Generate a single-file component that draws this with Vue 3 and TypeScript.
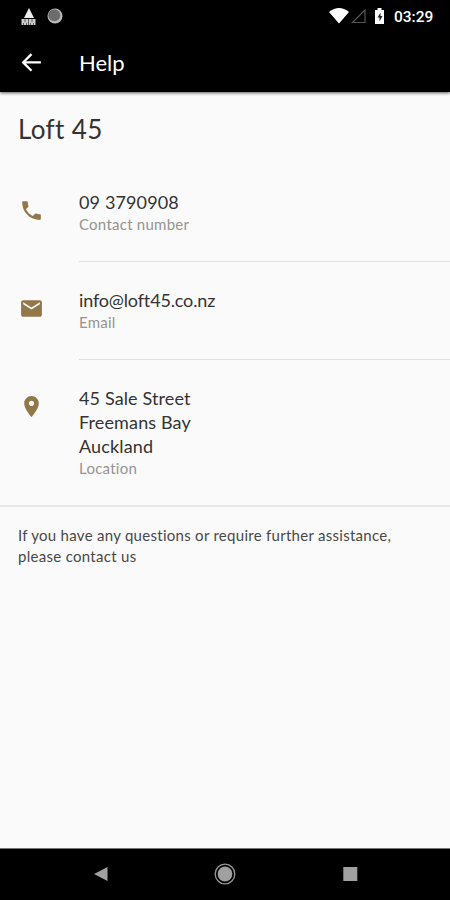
<script setup lang="ts">
interface Contact {
  id: string
  lines: string[]
  label: string
  icon: string
}

const contacts: Contact[] = [
  {
    id: 'phone',
    lines: ['09 3790908'],
    label: 'Contact number',
    icon: 'M6.62 10.79c1.44 2.83 3.76 5.14 6.59 6.59l2.2-2.2c.27-.27.67-.36 1.02-.24 1.12.37 2.33.57 3.57.57.55 0 1 .45 1 1V20c0 .55-.45 1-1 1C10.61 21 3 13.39 3 4c0-.55.45-1 1-1h3.5c.55 0 1 .45 1 1 0 1.25.2 2.45.57 3.57.11.35.03.74-.25 1.02l-2.2 2.2z',
  },
  {
    id: 'email',
    lines: ['info@loft45.co.nz'],
    label: 'Email',
    icon: 'M20 4H4c-1.1 0-2 .9-2 2v12c0 1.100.9 2 2 2h16c1.100 0 2-.9 2-2V6c0-1.100-.9-2-2-2zm0 4l-8 5-8-5V6l8 5 8-5v2z',
  },
  {
    id: 'place',
    lines: ['45 Sale Street', 'Freemans Bay', 'Auckland'],
    label: 'Location',
    icon: 'M12 2C8.13 2 5 5.13 5 9c0 5.250 7 13 7 13s7-7.750 7-13c0-3.870-3.130-7-7-7zm0 9.500c-1.380 0-2.500-1.120-2.500-2.500s1.120-2.500 2.500-2.500 2.500 1.120 2.500 2.500-1.120 2.500-2.500 2.500z',
  },
]
</script>

<template>
  <div class="screen">
    <header class="top">
      <div class="status">
        <svg class="notices" width="46" height="18" viewBox="0 0 46 18">
          <path d="M9 0 14 10H4z" fill="#eee" />
          <path d="M1.500 11h14v6h-14z" fill="#ccc" />
          <path d="M5 11v3M8.500 11v6M12 11v3M3.500 15v2M6.500 15v2M10.500 15v2M13.500 15v2" stroke="#444" stroke-width=".8" />
          <circle cx="35" cy="8" r="7.500" fill="#bbb" />
          <circle cx="34.300" cy="7.300" r="6" fill="#6c6c6c" />
        </svg>
        <svg class="signals" width="60" height="18" viewBox="0 0 60 18">
          <path d="M0 4Q10-4 20 4L10 15.500z" fill="#fff" />
          <path d="M36 2v12.500H23.500z" fill="none" stroke="#555" stroke-width="1.200" />
          <path d="M48.500 0h4v2H55v14h-9V2h2.500z" fill="#fff" />
          <path d="M51.500 4.500 48.500 9.500h2v4l3-5.500h-2z" fill="#222" />
        </svg>
        <span class="time">03:29</span>
      </div>
      <div class="appbar">
        <svg class="back" width="25" height="25" viewBox="0 0 24 24">
          <path d="M21 11.900H4M12 4 4 11.900l8 8" fill="none" stroke="#fff" stroke-width="2.200" />
        </svg>
        <h1>Help</h1>
      </div>
    </header>
    <main>
      <h2>Loft 45</h2>
      <section v-for="c in contacts" :key="c.id" class="contact" :class="c.id">
        <svg class="icon" width="25" height="25" viewBox="0 0 24 24"><path :d="c.icon" /></svg>
        <div class="details">
          <div v-for="line in c.lines" :key="line" class="value">{{ line }}</div>
          <div class="label">{{ c.label }}</div>
        </div>
      </section>
      <p>
        <span class="wide">If you have any questions or require further assistance,</span><br />please contact us
      </p>
    </main>
    <nav>
      <svg width="450" height="51" viewBox="0 0 450 51" fill="#a0a0a0">
        <path d="M94 25 107.500 18v14z" />
        <circle cx="225" cy="25" r="9.800" fill="none" stroke="#999" stroke-width="1.300" />
        <circle cx="225" cy="25" r="7.400" />
        <path d="M343.300 18h14v14h-14z" />
      </svg>
    </nav>
  </div>
</template>

<style>
body {
  margin: 0;
  background: #fafafa;
}
</style>

<style scoped>
.screen {
  display: flex;
  flex-direction: column;
  width: 450px;
  height: 900px;
  overflow: hidden;
  background: #fafafa;
  color: #333;
  font-family: Lato, "Open Sans", sans-serif;
  font-variant-ligatures: none;
}
.top {
  height: 92px;
  flex: none;
  background: #000;
  color: #fff;
  box-shadow: 0 1px 3px rgba(0, 0, 0, 0.65);
}
.status {
  display: flex;
  height: 32px;
  box-sizing: border-box;
  padding: 8px 0 0 20px;
}
.signals {
  margin-left: 263px;
}
.time {
  margin-left: 5px;
  font: 500 15.5px/18px Roboto, sans-serif;
}
.appbar {
  display: flex;
  height: 60px;
  align-items: center;
  padding-left: 19px;
}
.back {
  margin-top: 1px;
}
h1 {
  margin: 2px 0 0 35px;
  font-size: 22px;
  line-height: 28px;
  font-weight: 400;
}
main {
  flex: 1;
}
h2 {
  margin: 0;
  padding: 20px 0 0 18px;
  height: 51px;
  font-size: 26px;
  line-height: 34px;
  font-weight: 400;
  letter-spacing: 0.35px;
}
.contact {
  display: flex;
  box-sizing: border-box;
  height: 98px;
  padding-left: 19px;
}
.phone {
  height: 99px;
}
.place {
  height: 147px;
  border-bottom: 2px solid #e8e8e8;
}
.icon {
  flex: none;
  margin-top: 34px;
  fill: #927849;
}
.phone .icon {
  margin-top: 35px;
}
.details {
  flex: 1;
  margin-left: 35px;
  padding-top: 26px;
  border-bottom: 1px solid #dfdfdf;
}
.phone .details {
  padding-top: 27px;
}
.place .details {
  border: 0;
}
.value {
  font-size: 18px;
  line-height: 24px;
  letter-spacing: 0.13px;
}
.email .value {
  letter-spacing: -0.15px;
}
.label {
  font-size: 15px;
  line-height: 20px;
  letter-spacing: 0.25px;
  color: #949494;
}
p {
  margin: 18px 0 0 18px;
  font-size: 15px;
  line-height: 21px;
  letter-spacing: 0.3px;
  color: #484848;
}
.wide {
  letter-spacing: 0.28px;
}
nav {
  height: 51px;
  flex: none;
  border-top: 1px solid #777;
  background: #000;
}
</style>
